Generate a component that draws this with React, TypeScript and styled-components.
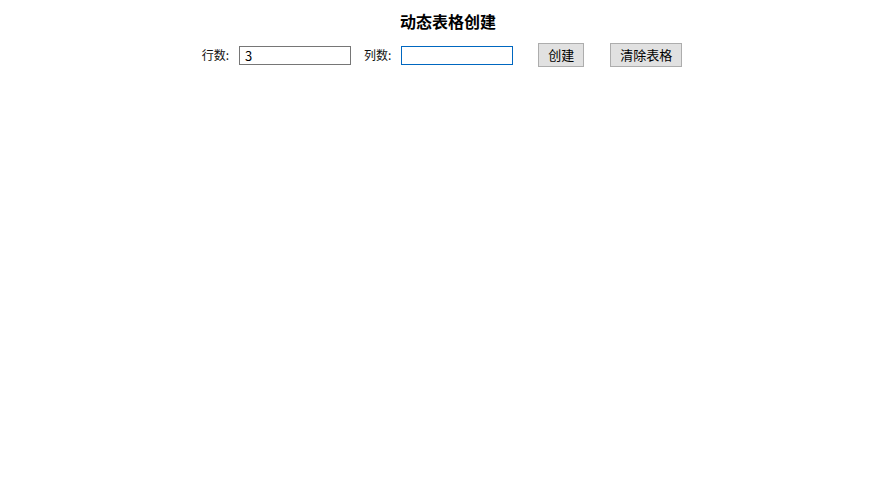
import React, { useState } from 'react';
import styled, { createGlobalStyle } from 'styled-components';

const GlobalStyle = createGlobalStyle`
  html, body {
    margin: 0;
    padding: 0;
    background: #ffffff;
    font-family: "Noto Sans CJK SC", "Liberation Sans", sans-serif;
    color: #000;
  }
`;

function App() {
  const [rows, setRows] = useState('3');
  const [cols, setCols] = useState('');

  return (
    <Page>
      <GlobalStyle />
      <Title>动态表格创建</Title>
      <Toolbar>
        <Label>行数:</Label>
        <Field value={rows} onChange={(e) => setRows(e.target.value)} />
        <Label $gap={13}>列数:</Label>
        <Field $focused value={cols} onChange={(e) => setCols(e.target.value)} />
        <Button $gap={25}>创建</Button>
        <Button $gap={26}>清除表格</Button>
      </Toolbar>
    </Page>
  );
}

export default App;

const Page = styled.div`
  display: flex;
  flex-direction: column;
  align-items: center;
  width: 896px;
  height: 493px;
  padding-top: 9px;
  box-sizing: border-box;
`;

const Title = styled.h1`
  margin: 0;
  font-size: 16px;
  font-weight: 700;
  line-height: 24px;
  height: 24px;
`;

const Toolbar = styled.div`
  display: flex;
  align-items: center;
  margin-top: 10px;
  padding-right: 12px;
`;

const Label = styled.span<{ $gap?: number }>`
  font-size: 12px;
  line-height: 16px;
  margin-left: ${(p) => p.$gap ?? 0}px;
  margin-right: 10px;
  color: #111;
`;

const Field = styled.input<{ $focused?: boolean }>`
  width: 112px;
  height: 19px;
  box-sizing: border-box;
  border: 1px solid ${(p) => (p.$focused ? '#0067c0' : '#767676')};
  padding: 0 5px;
  font-size: 13px;
  font-family: "Noto Sans CJK SC", "Liberation Sans", sans-serif;
  color: #000;
  outline: none;
  border-radius: 0;
  background: #fff;
`;

const Button = styled.button<{ $gap?: number }>`
  margin-left: ${(p) => p.$gap ?? 0}px;
  height: 24px;
  padding: 0 9px;
  background: #e1e1e1;
  border: 1px solid #adadad;
  border-radius: 0;
  font-size: 13px;
  font-family: "Noto Sans CJK SC", "Liberation Sans", sans-serif;
  color: #000;
  line-height: 22px;
`;
